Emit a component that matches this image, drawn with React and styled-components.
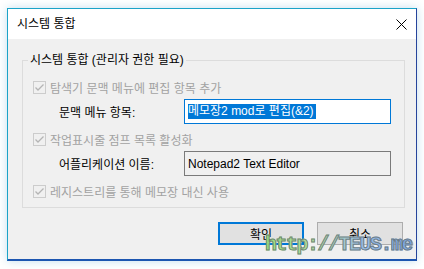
import React from "react";
import styled, { createGlobalStyle } from "styled-components";

const GlobalStyle = createGlobalStyle`
  body {
    margin: 0;
    background: #ffffff;
    font-family: "Liberation Sans", "Noto Sans CJK KR", sans-serif;
    font-size: 12px;
  }
`;

const Stage = styled.div`
  width: 424px;
  height: 269px;
  padding: 8px 0 0 7px;
  box-sizing: border-box;
  overflow: hidden;
`;

const Window = styled.div`
  position: relative;
  width: 410px;
  height: 253px;
  box-sizing: border-box;
  display: flex;
  flex-direction: column;
  border: 1px solid #1aa3c8;
  border-right-color: #26449c;
  border-bottom: 2px solid #1c55b0;
  box-shadow: 0 0 9px rgba(40, 140, 190, 0.28);
  background: #f0f0f0;
`;

const TitleBar = styled.div`
  height: 30px;
  flex: none;
  display: flex;
  align-items: center;
  justify-content: space-between;
  padding-left: 9px;
  background: #ffffff;
  color: #000;
`;

const Title = styled.span`
  line-height: 16px;
`;

const CloseButton = styled.div`
  width: 30px;
  height: 30px;
  display: flex;
  align-items: center;
  justify-content: center;
`;

const Body = styled.div`
  flex: 1;
  display: flex;
  flex-direction: column;
  padding: 0 13px 0 14px;
`;

const Group = styled.fieldset`
  margin: 13px -2px 0 0;
  padding: 9px 0 6px 10px;
  border: 1px solid #dcdcdc;
  min-inline-size: 0;
  display: flex;
  flex-direction: column;
`;

const Legend = styled.legend`
  margin-left: -5px;
  padding: 0 2px;
  line-height: 16px;
  color: #000;
`;

const CheckRow = styled.div`
  height: 20px;
  display: flex;
  align-items: center;
  gap: 4px;
  color: #a2a2a2;
`;

const CheckBox = styled.span`
  width: 13px;
  height: 13px;
  box-sizing: border-box;
  border: 1px solid #cccccc;
  background: #f0f0f0;
  display: flex;
  align-items: center;
  justify-content: center;
`;

const FieldRow = styled.div`
  height: 25px;
  margin: 2px 0 5px;
  padding-left: 26px;
  display: flex;
  align-items: center;
`;

const Label = styled.span`
  width: 125px;
  color: #000;
`;

const TextBox = styled.div`
  width: 207px;
  height: 25px;
  box-sizing: border-box;
  border: 1px solid ${(p) => (p.$focused ? "#0078d7" : "#7a7a7a")};
  background: ${(p) => (p.$focused ? "#ffffff" : "#f0f0f0")};
  display: flex;
  align-items: center;
  padding-left: 3px;
  color: #000;
`;

const Selected = styled.span`
  background: #0078d7;
  color: #fff;
  line-height: 15px;
  padding-right: 2px;
`;

const ButtonRow = styled.div`
  display: flex;
  justify-content: flex-end;
  gap: 13px;
  margin-top: 14px;
`;

const Button = styled.div`
  width: 86px;
  height: 23px;
  box-sizing: border-box;
  border: ${(p) => (p.$default ? "2px solid #0078d7" : "1px solid #adadad")};
  background: #e1e1e1;
  display: flex;
  align-items: center;
  justify-content: center;
  color: #000;
`;

const Watermark = styled.div`
  position: absolute;
  left: 257px;
  top: 223px;
  font-family: "Liberation Mono", monospace;
  font-weight: bold;
  font-size: 20px;
  line-height: 26px;
  letter-spacing: -1.5px;
  background: linear-gradient(90deg, #98e07c 0%, #b2dca0 35%, #98bce6 65%, #7aa6e4 100%);
  -webkit-background-clip: text;
  background-clip: text;
  color: transparent;
  -webkit-text-stroke: 1px rgba(100, 110, 110, 0.8);
`;

const Check = () => (
  <CheckBox>
    <svg width="11" height="11" viewBox="0 0 11 11">
      <path d="M1.5 5.5 L4 8 L9.5 2.5" fill="none" stroke="#b4b4b4" strokeWidth="1.3" />
    </svg>
  </CheckBox>
);

export default function App() {
  return (
    <Stage>
      <GlobalStyle />
      <Window>
        <TitleBar>
          <Title>시스템 통합</Title>
          <CloseButton>
            <svg width="11" height="11" viewBox="0 0 11 11">
              <path d="M0.5 0.5 L10.5 10.5 M10.5 0.5 L0.5 10.5" stroke="#000" strokeWidth="1" />
            </svg>
          </CloseButton>
        </TitleBar>
        <Body>
          <Group>
            <Legend>시스템 통합 (관리자 권한 필요)</Legend>
            <CheckRow>
              <Check />
              탐색기 문맥 메뉴에 편집 항목 추가
            </CheckRow>
            <FieldRow>
              <Label>문맥 메뉴 항목:</Label>
              <TextBox $focused>
                <Selected>메모장2 mod로 편집(&amp;2)</Selected>
              </TextBox>
            </FieldRow>
            <CheckRow>
              <Check />
              작업표시줄 점프 목록 활성화
            </CheckRow>
            <FieldRow>
              <Label>어플리케이션 이름:</Label>
              <TextBox>Notepad2 Text Editor</TextBox>
            </FieldRow>
            <CheckRow>
              <Check />
              레지스트리를 통해 메모장 대신 사용
            </CheckRow>
          </Group>
          <ButtonRow>
            <Button $default>확인</Button>
            <Button>취소</Button>
          </ButtonRow>
        </Body>
        <Watermark>http://TEUS.me</Watermark>
      </Window>
    </Stage>
  );
}
